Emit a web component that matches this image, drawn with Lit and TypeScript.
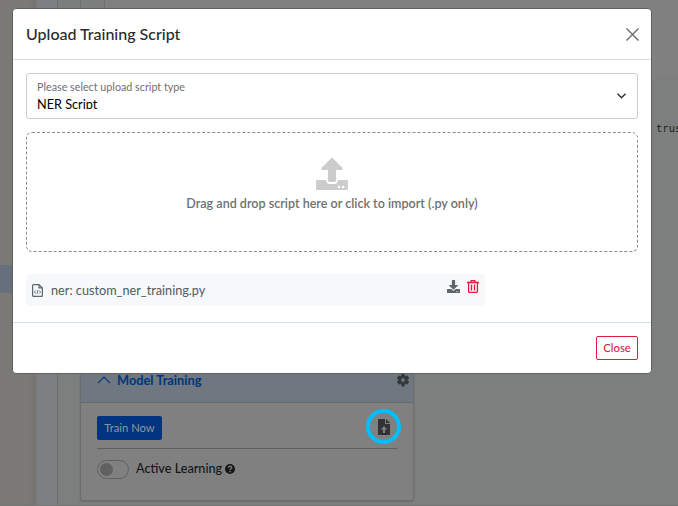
import { LitElement, html, css, svg } from "lit";
import { customElement } from "lit/decorators.js";

const uploadPath = svg`<path d="M296 384h-80c-13.300 0-24-10.700-24-24V192h-87.700c-17.800 0-26.700-21.500-14.100-34.100L242.300 5.700c7.500-7.500 19.800-7.500 27.300 0l152.200 152.200c12.600 12.600 3.700 34.100-14.100 34.100H320v168c0 13.300-10.700 24-24 24zm216-8v112c0 13.300-10.700 24-24 24H24c-13.300 0-24-10.700-24-24V376c0-13.300 10.700-24 24-24h136v8c0 30.900 25.100 56 56 56h80c30.900 0 56-25.100 56-56v-8h136c13.300 0 24 10.700 24 24zm-124 88c0-11-9-20-20-20s-20 9-20 20 9 20 20 20 20-9 20-20zm64 0c0-11-9-20-20-20s-20 9-20 20 9 20 20 20 20-9 20-20z"/>`;
const downloadPath = svg`<path d="M216 0h80c13.300 0 24 10.700 24 24v168h87.700c17.800 0 26.700 21.500 14.100 34.100L269.700 378.300c-7.500 7.500-19.800 7.500-27.300 0L90.100 226.100c-12.600-12.600-3.700-34.100 14.100-34.100H192V24c0-13.300 10.700-24 24-24zm296 376v112c0 13.300-10.700 24-24 24H24c-13.300 0-24-10.700-24-24V376c0-13.300 10.700-24 24-24h146.700l49 49c20.100 20.100 52.500 20.100 72.600 0l49-49H488c13.300 0 24 10.700 24 24zm-124 88c0-11-9-20-20-20s-20 9-20 20 9 20 20 20 20-9 20-20zm64 0c0-11-9-20-20-20s-20 9-20 20 9 20 20 20 20-9 20-20z"/>`;

@customElement("training-panel")
export class TrainingPanel extends LitElement {
  static styles = css`
    :host { display: block; width: 334px; box-sizing: border-box; border: 1px solid #6c6d6e; border-radius: 0 0 3px 3px; background: #808080; box-shadow: 0 1px 2px rgba(0,0,0,.15); overflow: hidden; }
    .head { height: 61px; box-sizing: border-box; padding: 16px 3px 0 16px; display: flex; align-items: center; background: #6f7780; border-bottom: 1px solid #66696c; color: #00357f; font-size: 12.800px; font-weight: 700; }
    .head span { flex: 1; margin-left: 6px; line-height: 16px; margin-top: -1px; }
    .body { height: 97px; padding: 13px 16px 0; box-sizing: border-box; }
    .actions { height: 33px; box-sizing: border-box; border-bottom: 1px solid #5f5f5f; display: flex; justify-content: space-between; }
    .train { width: 65px; height: 24px; border: 0; padding: 0; border-radius: 2px; background: #003380; color: #8a919b; font: 500 11.200px/24px Lato, sans-serif; }
    .ring { box-sizing: border-box; width: 35px; height: 35px; margin: -7px -4px 0 0; border: 4px solid #00bfff; border-radius: 50%; display: flex; align-items: center; justify-content: center; }
    .learning { display: flex; align-items: center; height: 19px; margin-top: 11px; color: #151617; font-size: 12.650px; font-weight: 500; }
    .toggle { box-sizing: border-box; width: 32px; height: 19px; border: 1px solid #606060; border-radius: 10px; padding: 2px; margin-right: 7px; }
    .knob { display: block; width: 13px; height: 13px; border-radius: 50%; background: #606060; }
    .label { line-height: 17px; margin-top: -2px; }
    .help { margin-left: 3px; margin-top: -1px; }
    svg { display: block; flex: none; }
  `;
  render() {
    return html`
      <div class="head">
        <svg width="14" height="8" viewBox="0 0 14 8" fill="none" stroke="#00357f" stroke-width="1.200"><path d="M1 7.200 7 1 13 7.200"/></svg>
        <span>Model Training</span>
        <svg width="14" height="14" viewBox="0 0 24 24" fill="#36393c"><path d="M19.400 13a7.500 7.500 0 0 0 0-2l2.600-2-2.500-4.300-3.100 1.200a8 8 0 0 0-1.800-1L14.100 1.500H9.900l-.5 3.400a8 8 0 0 0-1.800 1L4.500 4.700 2 9l2.600 2a7.500 7.500 0 0 0 0 2L2 15l2.500 4.300 3.100-1.200 1.800 1 .5 3.400h4.200l.5-3.400 1.800-1 3.100 1.200L22 15zM12 15.800a3.800 3.800 0 1 1 0-7.600 3.800 3.800 0 0 1 0 7.600z" fill-rule="evenodd" stroke="#36393c"/></svg>
      </div>
      <div class="body">
        <div class="actions">
          <button class="train">Train Now</button>
          <div class="ring"><svg width="12" height="16" viewBox="0 0 12 16" fill="#303335"><path fill-rule="evenodd" d="M.7 0H7v4.400c0 .4.200.6.600.6H12v10.300c0 .4-.3.700-.7.700H.7c-.4 0-.7-.3-.7-.7V.7C0 .3.300 0 .7 0zM6 7 2.800 10.500H5V14h2v-3.500h2.200z"/><path d="M8 0v4h4z"/></svg></div>
        </div>
        <div class="learning">
          <span class="toggle"><span class="knob"></span></span><span class="label">Active Learning</span>
          <svg class="help" width="10" height="10" viewBox="0 0 10 10"><circle cx="5" cy="5" r="5" fill="#151617"/><path d="M3.400 3.800c0-2.300 3.300-2.200 3.300-.2C6.700 4.800 5 4.700 5 6" fill="none" stroke="#808080" stroke-width="1.300"/><circle cx="5" cy="7.600" r=".8" fill="#808080"/></svg>
        </div>
      </div>`;
  }
}

@customElement("upload-dialog")
export class UploadDialog extends LitElement {
  static styles = css`
    :host { display: flex; flex-direction: column; box-sizing: border-box; width: 640px; height: 366px; border: 1px solid #606161; border-radius: 4px; background: #fff; overflow: hidden; }
    header { flex: none; box-sizing: border-box; height: 51px; border-bottom: 1px solid #d8dcdf; padding: 0 12px 0 13px; display: flex; align-items: center; justify-content: space-between; color: #292b2d; }
    h1 { font: 500 16px/20px Lato, sans-serif; margin: 0; }
    main { flex: 1; padding: 13px 13px 0; }
    .select { box-sizing: border-box; height: 46px; border: 1px solid #c7cdd2; border-radius: 3px; padding: 6px 11px 0 10px; display: flex; justify-content: space-between; }
    .label { color: #6d7072; font-size: 10.750px; line-height: 14px; }
    .value { color: #000; font-size: 12.700px; line-height: 18px; height: 14px; overflow: hidden; margin-top: 1px; }
    .chevron { margin-top: 13px; }
    .drop { box-sizing: border-box; height: 120px; margin-top: 13px; border: 1px dashed #8c8c8c; border-radius: 6px; display: flex; flex-direction: column; align-items: center; padding-top: 25px; }
    .hint { color: #707070; font-size: 12.550px; line-height: 16px; margin-top: 6px; font-weight: 600; white-space: nowrap; }
    .file { box-sizing: border-box; width: 459px; height: 32px; margin-top: 22px; background: #f6f8fa; border-radius: 3px; padding: 0 6px; display: flex; align-items: center; color: #505b64; font-size: 12.700px; }
    .name { flex: 1; margin-left: 8px; }
    .trash { margin-left: 7px; }
    .act { margin-top: -8px; }
    footer { flex: none; box-sizing: border-box; height: 51px; border-top: 1px solid #d4dee6; display: flex; justify-content: flex-end; padding: 13px 13px 0; }
    button { box-sizing: border-box; width: 42px; height: 24px; border: 1px solid #dc1f3c; border-radius: 2px; background: #fff; color: #dc1f3c; font: 500 11.300px/20px Lato, sans-serif; padding: 0; }
    svg { display: block; flex: none; }
  `;
  render() {
    return html`
      <header><h1>Upload Training Script</h1>
        <svg width="13" height="13" viewBox="0 0 13 13" fill="none" stroke="#737373" stroke-width="1.500"><path d="m.5.500 12 12M12.500.500l-12 12"/></svg>
      </header>
      <main>
        <div class="select">
          <div><div class="label">Please select upload script type</div><div class="value">NER Script</div></div>
          <svg class="chevron" width="9" height="6" viewBox="0 0 9 6" fill="none" stroke="#333" stroke-width="1.500"><path d="m.5.700 4 4 4-4"/></svg>
        </div>
        <div class="drop">
          <svg width="32" height="32" viewBox="0 0 512 512" fill="#ccc">${uploadPath}</svg>
          <div class="hint">Drag and drop script here or click to import (.py only)</div>
        </div>
        <div class="file">
          <svg width="11" height="13" viewBox="0 0 11 13" fill="none" stroke="#5b666e" stroke-width="1.200"><path d="M1.500.600H7l3.400 3.300v7.500c0 .6-.4 1-1 1H1.600c-.6 0-1-.4-1-1V1.600c0-.6.400-1 .9-1zM7 .6v3.300h3.400"/><path d="M3.700 6.500 2.400 8l1.300 1.500M7.300 6.500 8.600 8 7.300 9.500M6 6 5 10" stroke-width=".9"/></svg>
          <span class="name">ner: custom_ner_training.py</span>
          <svg class="act" width="13" height="13" viewBox="0 0 512 512" fill="#5b666e">${downloadPath}</svg>
          <svg class="act trash" width="12" height="13" viewBox="0 0 12 13" fill="none" stroke="#dc1f3c" stroke-width="1.300"><path d="M0 2.500h12M3.400 2.300 4.200.700h3.600l.8 1.600M1.600 2.500v8.900c0 .6.400 1 1 1h6.800c.6 0 1-.4 1-1V2.500M4.500 4.500v6M7.500 4.500v6"/></svg>
        </div>
      </main>
      <footer><button>Close</button></footer>`;
  }
}

@customElement("app-root")
export class AppRoot extends LitElement {
  static styles = css`
    :host { display: block; position: relative; width: 678px; height: 506px; overflow: hidden; font-family: Lato, sans-serif; }
    .page { box-sizing: border-box; display: grid; grid-template-columns: 36px 22px 1fr; height: 506px; background: #7c7f7e; border-bottom: 1px solid #757777; }
    .rail { background: linear-gradient(to right, #7a7976 80%, #747371); padding-top: 265px; }
    .selected { height: 28px; background: #66707c; }
    .gutter { box-sizing: border-box; background: #7d8080; border-right: 1px solid #6c6e6e; }
    .content { display: flex; flex-direction: column; min-width: 0; }
    .top { display: flex; height: 77px; background: #808080; }
    .tab { box-sizing: border-box; flex: none; background: #7b7e7d; border-right: 1px solid #6e7070; }
    .first { width: 23px; }
    .second { width: 24px; }
    .code { height: 264px; padding: 42px 0 0 598px; box-sizing: border-box; font: 10.500px/18px "DejaVu Sans Mono", monospace; color: #1c1e1e; white-space: pre; }
    training-panel { margin-left: 22px; }
    upload-dialog { position: absolute; left: 12px; top: 8px; }
  `;
  render() {
    return html`
      <div class="page">
        <div class="rail"><div class="selected"></div></div>
        <div class="gutter"></div>
        <div class="content">
          <div class="top"><div class="tab first"></div><div class="tab second"></div></div>
          <div class="code">trus</div><training-panel></training-panel>
        </div>
      </div>
      <upload-dialog></upload-dialog>`;
  }
}
